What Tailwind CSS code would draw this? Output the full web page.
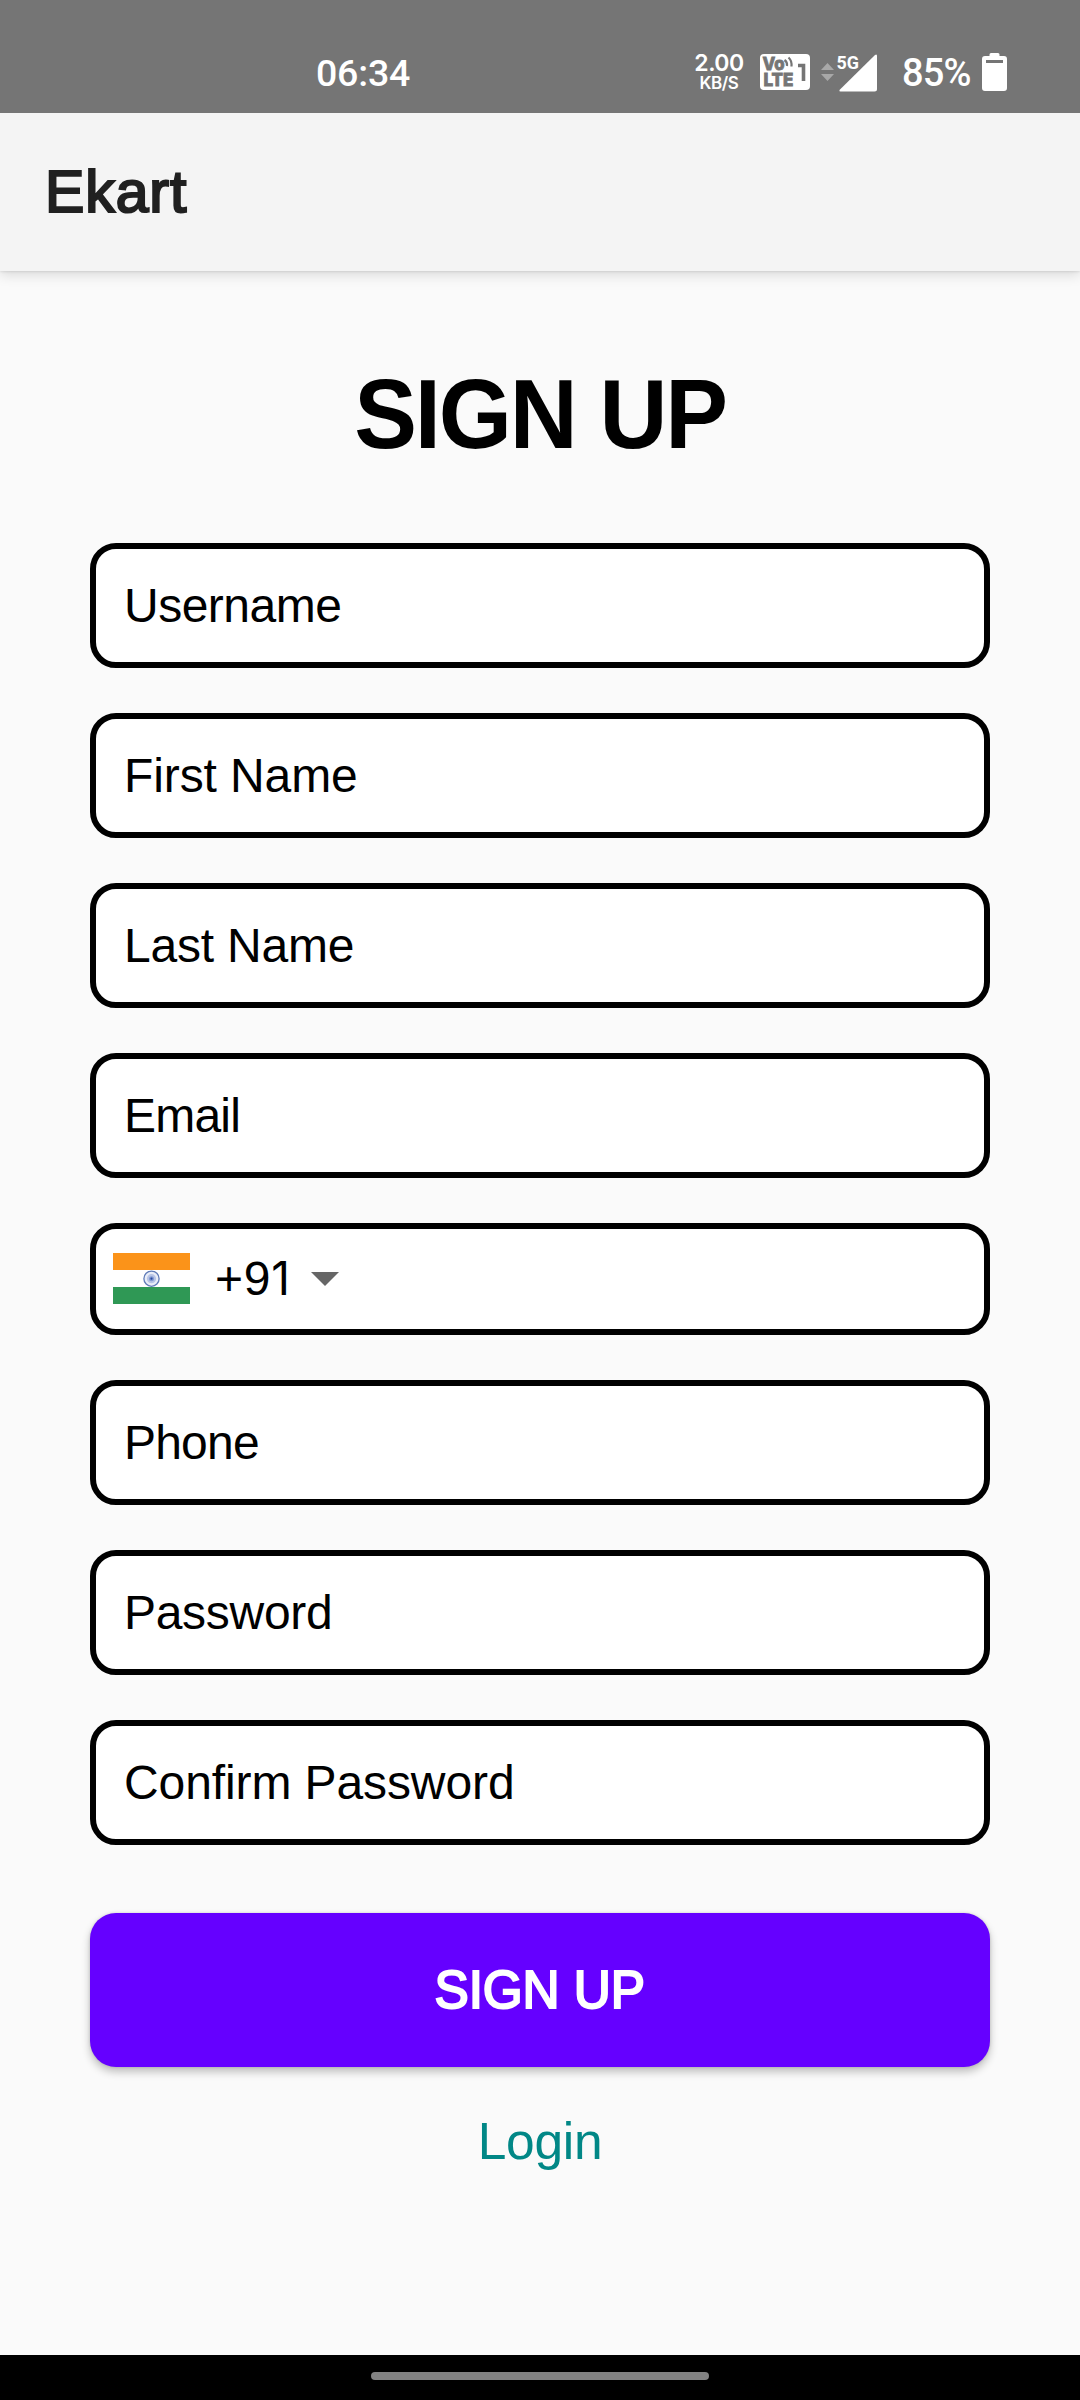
<!DOCTYPE html>
<html lang="en">
<head>
<meta charset="utf-8">
<title>Ekart</title>
<script src="https://cdn.jsdelivr.net/npm/@tailwindcss/browser@4"></script>
</head>
<body class="bg-[#fafafa]">
<div class="flex h-[2400px] w-[1080px] flex-col overflow-hidden bg-[#fafafa] font-['Liberation_Sans',sans-serif] text-black">
  <!-- Status bar -->
  <header class="z-20 flex h-[113px] shrink-0 items-start bg-[#757575] pt-[50px] font-['Roboto',sans-serif] font-medium text-white">
    <div class="ml-[316px] w-[379px] text-[37.5px] leading-[46px] tracking-[-0.2px]">06:34</div>
    <div class="flex w-[48px] flex-col items-center pt-[2px] font-['Inter',sans-serif] font-semibold">
      <span class="text-[23px] leading-[23px] tracking-[-0.5px]">2.00</span>
      <span class="text-[17px] leading-[17px] tracking-[-0.4px]">KB/S</span>
    </div>
    <svg class="ml-[17px] mt-[4px] h-[36px] w-[50px] shrink-0" viewBox="0 0 50 36">
      <rect width="50" height="36" rx="4" fill="#fff"/>
      <g fill="#757575" stroke="#757575" stroke-width=".8" font-family="Inter, sans-serif" font-weight="800">
        <text x="2.5" y="16" font-size="18" textLength="22" lengthAdjust="spacingAndGlyphs">Vo</text>
        <text x="3.5" y="31.5" font-size="17" textLength="30" lengthAdjust="spacingAndGlyphs">LTE</text>
      </g>
      <g fill="none" stroke="#757575" stroke-width="2.2">
        <path d="M24.500 6q3 2 2.500 6M28.500 3.500q3.500 3 3 9"/>
        <path d="M38 11.500h5.500V27" stroke-width="3.600"/>
      </g>
    </svg>
    <svg class="ml-[11px] mt-[3px] h-[40px] w-[57px] shrink-0" viewBox="0 0 57 40">
      <path d="M0 17 6.500 10 13 17ZM0 21h13L6.500 28Z" fill="#a8a8a8"/>
      <path d="M18.500 37 54 2q2-1.500 2 1v33q0 2.500-2.500 2.500h-34q-1.500 0-1-1.500Z" fill="#fff"/>
      <text x="15.500" y="15.500" font-family="Roboto, sans-serif" font-weight="700" font-size="18.500" textLength="22.500" lengthAdjust="spacingAndGlyphs" fill="#fff">5G</text>
    </svg>
    <div class="ml-[24px] w-[80px] text-[38px] leading-[46px] tracking-[-0.8px]">85%</div>
    <svg class="mt-[3px] h-[38px] w-[25px] shrink-0" viewBox="0 0 25 38">
      <path d="M7.500 3V1.500Q7.500 0 9 0h7q1.500 0 1.500 1.500V3H22q3 0 3 3v29q0 3-3 3H3q-3 0-3-3V6q0-3 3-3Z" fill="#fff"/>
      <path d="M4 7h17v3H4Z" fill="#757575"/>
    </svg>
  </header>

  <!-- App bar -->
  <div class="z-10 flex h-[158px] shrink-0 items-center bg-[#f4f4f4] pl-[45px] shadow-[0_4px_12px_rgba(0,0,0,0.13),0_0_3px_rgba(0,0,0,0.16)]">
    <h1 class="text-[59px] leading-[68px] tracking-[0.9px] text-[#202020] [-webkit-text-stroke:2.2px_#202020]">Ekart</h1>
  </div>

  <main class="flex grow flex-col px-[90px]">
    <h2 class="mt-[88px] h-[110px] scale-x-95 text-center text-[99px] leading-[110px] font-bold tracking-[-2.3px]">SIGN UP</h2>

    <form class="mt-[74px] flex flex-col gap-[45px] text-[48px] tracking-[-0.5px]">
      <div class="flex h-[125px] items-center rounded-[26px] border-6 border-black bg-white pl-[28px]">Username</div>
      <div class="flex h-[125px] items-center rounded-[26px] border-6 border-black bg-white pl-[28px] tracking-[-0.1px]">First Name</div>
      <div class="flex h-[125px] items-center rounded-[26px] border-6 border-black bg-white pl-[28px] tracking-[-0.2px]">Last Name</div>
      <div class="flex h-[125px] items-center rounded-[26px] border-6 border-black bg-white pl-[28px] tracking-[-0.8px]">Email</div>
      <div class="flex h-[112px] items-center rounded-[26px] border-6 border-black bg-white pl-[17px]">
        <svg class="mb-[1px] h-[51px] w-[77px]" viewBox="0 0 77 51">
          <path d="M0 0h77v17H0Z" fill="#fb9319"/>
          <path d="M0 17h77v17H0Z" fill="#fff"/>
          <path d="M0 34h77v17H0Z" fill="#2f9855"/>
          <circle cx="38.500" cy="25.700" r="7.600" fill="#e8ecf7" stroke="#5f7bb8" stroke-width="1.300"/>
          <circle cx="38.500" cy="25.700" r="4.600" fill="#b7c4e6"/>
          <circle cx="38.500" cy="25.700" r="2.500" fill="#8299d2"/>
          <circle cx="38.500" cy="25.700" r="1.100" fill="#2748a0"/>
        </svg>
        <div class="ml-[25px] w-[96px] tracking-[0.8px] whitespace-nowrap">+9<span class="font-['Inter',sans-serif] text-[46px]">1</span></div>
        <svg class="h-[14px] w-[28px]" viewBox="0 0 28 14"><path d="M0 0h28L14 14Z" fill="#666"/></svg>
      </div>
      <div class="flex h-[125px] items-center rounded-[26px] border-6 border-black bg-white pl-[28px] tracking-[-0.8px]">Phone</div>
      <div class="flex h-[125px] items-center rounded-[26px] border-6 border-black bg-white pl-[28px] tracking-[-0.3px]">Password</div>
      <div class="flex h-[125px] items-center rounded-[26px] border-6 border-black bg-white pl-[28px] tracking-[-0.1px]">Confirm Password</div>
    </form>

    <button class="mt-[68px] h-[154px] shrink-0 rounded-[26px] bg-[#6500ff] pb-[2px] text-[54px] text-white shadow-[0_5px_8px_rgba(0,0,0,0.24),0_0_3px_rgba(0,0,0,0.15)]">
      <span class="inline-block scale-x-95 tracking-[-0.1px] [-webkit-text-stroke:2.2px_#fff]">SIGN UP</span>
    </button>
    <a class="mt-[42px] text-center text-[51.5px] leading-[64px] tracking-[-0.3px] text-[#018786]">Login</a>
  </main>

  <footer class="flex h-[45px] shrink-0 justify-center bg-black pt-[17px]">
    <div class="h-[8px] w-[338px] rounded-full bg-[#828282]"></div>
  </footer>
</div>
</body>
</html>
